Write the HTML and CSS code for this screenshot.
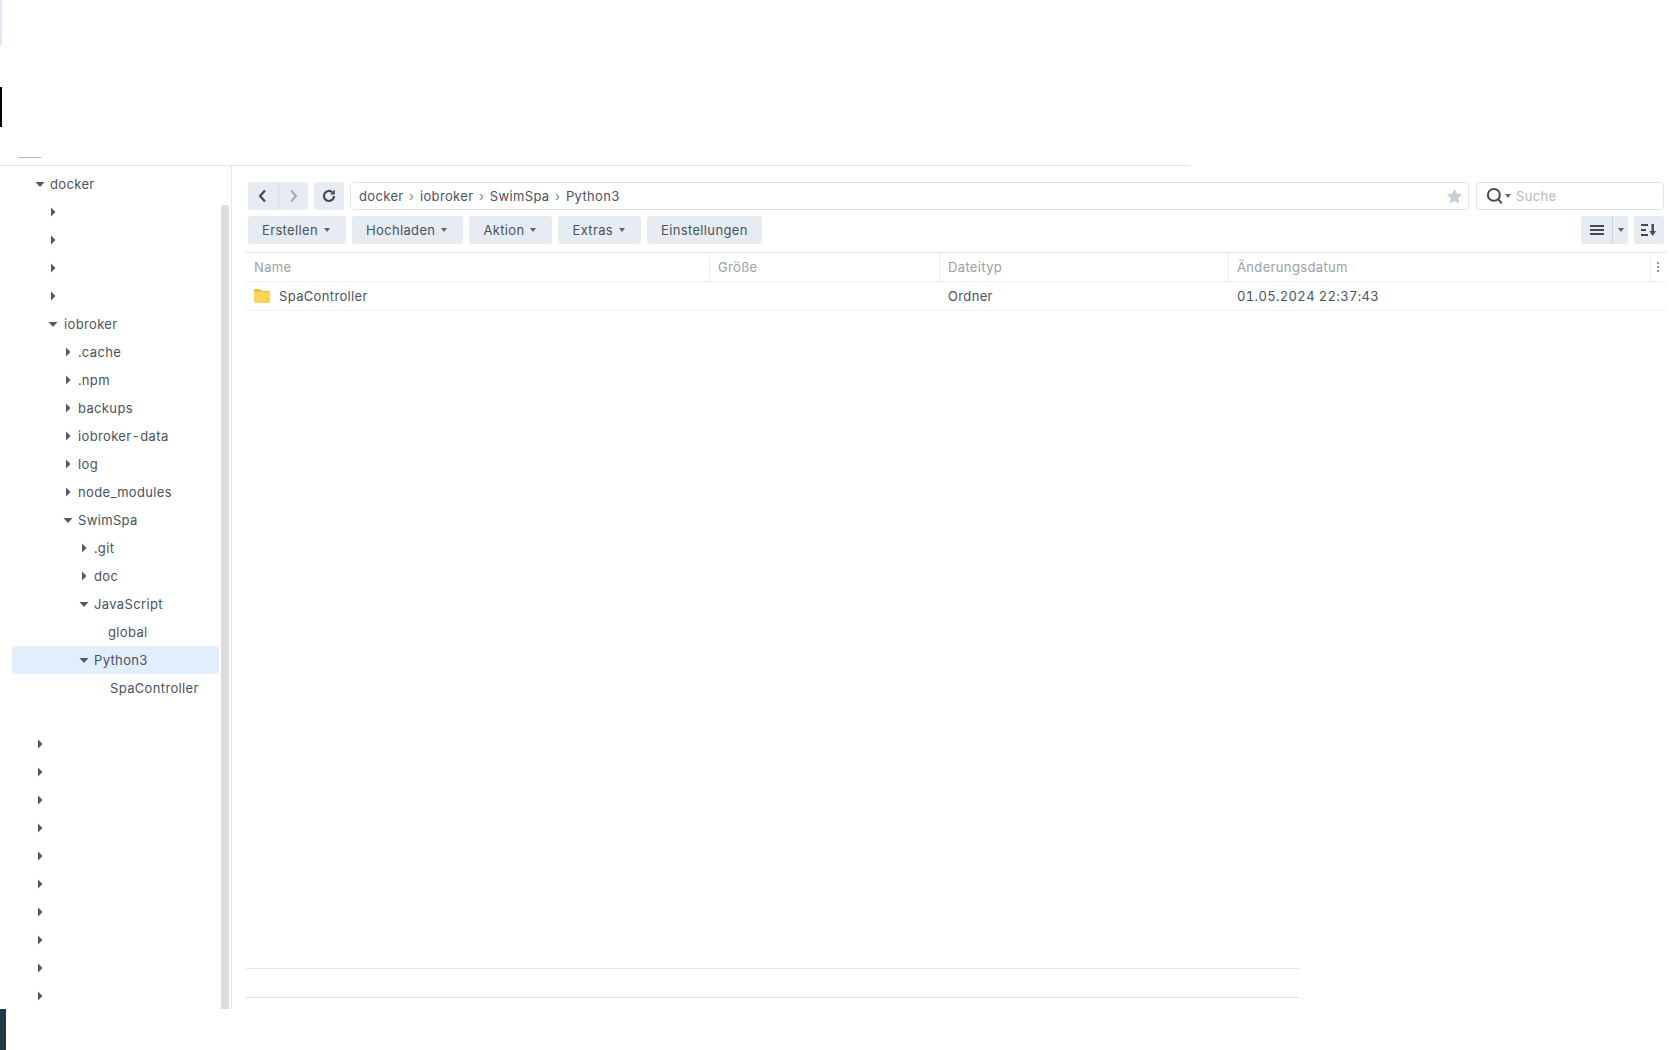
FILE: index.html
```html
<!DOCTYPE html>
<html lang="de">
<head>
<meta charset="utf-8">
<title>File Station</title>
<link rel="stylesheet" href="styles.css">
</head>
<body>
<div class="app">
  <span class="mark mark-blue"></span>
  <span class="mark mark-black"></span>
  <span class="mark mark-dash"></span>
  <span class="mark mark-teal"></span>
  <div class="topspace"></div>
  <div class="rule-top"></div>
  <div class="main">
    <aside class="sidebar">
      <div class="tree">
        <div class="row l0"><svg class="caret" viewBox="0 0 14 14"><path d="M2.500 5h9L7 10z"/></svg><span>docker</span></div>
        <div class="row l1"><svg class="caret" viewBox="0 0 14 14"><path d="M5 2.500v9L9.500 7z"/></svg></div>
        <div class="row l1"><svg class="caret" viewBox="0 0 14 14"><path d="M5 2.500v9L9.500 7z"/></svg></div>
        <div class="row l1"><svg class="caret" viewBox="0 0 14 14"><path d="M5 2.500v9L9.500 7z"/></svg></div>
        <div class="row l1"><svg class="caret" viewBox="0 0 14 14"><path d="M5 2.500v9L9.500 7z"/></svg></div>
        <div class="row l1"><svg class="caret" viewBox="0 0 14 14"><path d="M2.500 5h9L7 10z"/></svg><span>iobroker</span></div>
        <div class="row l2"><svg class="caret" viewBox="0 0 14 14"><path d="M5 2.500v9L9.500 7z"/></svg><span>.cache</span></div>
        <div class="row l2"><svg class="caret" viewBox="0 0 14 14"><path d="M5 2.500v9L9.500 7z"/></svg><span>.npm</span></div>
        <div class="row l2"><svg class="caret" viewBox="0 0 14 14"><path d="M5 2.500v9L9.500 7z"/></svg><span>backups</span></div>
        <div class="row l2"><svg class="caret" viewBox="0 0 14 14"><path d="M5 2.500v9L9.500 7z"/></svg><span>iobroker-data</span></div>
        <div class="row l2"><svg class="caret" viewBox="0 0 14 14"><path d="M5 2.500v9L9.500 7z"/></svg><span>log</span></div>
        <div class="row l2"><svg class="caret" viewBox="0 0 14 14"><path d="M5 2.500v9L9.500 7z"/></svg><span>node_modules</span></div>
        <div class="row l2"><svg class="caret" viewBox="0 0 14 14"><path d="M2.500 5h9L7 10z"/></svg><span>SwimSpa</span></div>
        <div class="row l3"><svg class="caret" viewBox="0 0 14 14"><path d="M5 2.500v9L9.500 7z"/></svg><span>.git</span></div>
        <div class="row l3"><svg class="caret" viewBox="0 0 14 14"><path d="M5 2.500v9L9.500 7z"/></svg><span>doc</span></div>
        <div class="row l3"><svg class="caret" viewBox="0 0 14 14"><path d="M2.500 5h9L7 10z"/></svg><span>JavaScript</span></div>
        <div class="row leaf-a"><span>global</span></div>
        <div class="row l3 selected"><svg class="caret" viewBox="0 0 14 14"><path d="M2.500 5h9L7 10z"/></svg><span>Python3</span></div>
        <div class="row leaf-b"><span>SpaController</span></div>
        <div class="row"></div>
        <div class="row l0"><svg class="caret" viewBox="0 0 14 14"><path d="M5 2.500v9L9.500 7z"/></svg></div>
        <div class="row l0"><svg class="caret" viewBox="0 0 14 14"><path d="M5 2.500v9L9.500 7z"/></svg></div>
        <div class="row l0"><svg class="caret" viewBox="0 0 14 14"><path d="M5 2.500v9L9.500 7z"/></svg></div>
        <div class="row l0"><svg class="caret" viewBox="0 0 14 14"><path d="M5 2.500v9L9.500 7z"/></svg></div>
        <div class="row l0"><svg class="caret" viewBox="0 0 14 14"><path d="M5 2.500v9L9.500 7z"/></svg></div>
        <div class="row l0"><svg class="caret" viewBox="0 0 14 14"><path d="M5 2.500v9L9.500 7z"/></svg></div>
        <div class="row l0"><svg class="caret" viewBox="0 0 14 14"><path d="M5 2.500v9L9.500 7z"/></svg></div>
        <div class="row l0"><svg class="caret" viewBox="0 0 14 14"><path d="M5 2.500v9L9.500 7z"/></svg></div>
        <div class="row l0"><svg class="caret" viewBox="0 0 14 14"><path d="M5 2.500v9L9.500 7z"/></svg></div>
        <div class="row l0"><svg class="caret" viewBox="0 0 14 14"><path d="M5 2.500v9L9.500 7z"/></svg></div>
      </div>
      <div class="scrollbar"></div>
    </aside>
    <section class="content">
      <div class="toolbar">
        <div class="btn-group">
          <button class="btn icon-btn nav-btn"><svg class="ico" viewBox="0 0 16 16"><path class="stroke strong" d="M10 2.500 5 8l5 5.500"/></svg></button>
          <button class="btn icon-btn nav-btn divided"><svg class="ico" viewBox="0 0 16 16"><path class="stroke muted" d="M5 2.500 10 8l-5 5.500"/></svg></button>
        </div>
        <button class="btn icon-btn refresh"><svg class="ico" viewBox="0 0 16 16"><path class="stroke strong" d="M13 8a5 5 0 1 1-1.600-3.700"/><path class="fill-dark" d="M13.800 1.800v4.700H9.100z"/></svg></button>
        <div class="path">
          <div class="crumbs">
            <span>docker</span><i class="sep">›</i><span>iobroker</span><i class="sep">›</i><span>SwimSpa</span><i class="sep">›</i><span>Python3</span>
          </div>
          <svg class="star" viewBox="0 0 16 16"><path d="M8 .8l2.200 4.700 5.100.6-3.800 3.500 1 5.100L8 12.200l-4.500 2.500 1-5.100L.7 6.100l5.100-.6z"/></svg>
        </div>
        <div class="search">
          <svg class="search-ico" viewBox="0 0 16 16"><circle cx="7" cy="7" r="5.300"/><path d="M10.800 10.800 14 14.500"/></svg>
          <i class="mini-caret"></i>
          <span class="placeholder">Suche</span>
        </div>
      </div>
      <div class="actions">
        <button class="btn text-btn has-menu">Erstellen<i class="mini-caret"></i></button>
        <button class="btn text-btn has-menu">Hochladen<i class="mini-caret"></i></button>
        <button class="btn text-btn has-menu">Aktion<i class="mini-caret"></i></button>
        <button class="btn text-btn has-menu">Extras<i class="mini-caret"></i></button>
        <button class="btn text-btn">Einstellungen</button>
        <div class="spacer"></div>
        <div class="btn-group view-group">
          <button class="btn icon-btn view-btn"><svg class="ico" viewBox="0 0 16 16"><path class="bars" d="M1 3h14v2H1zM1 7h14v2H1zM1 11h14v2H1z"/></svg></button>
          <button class="btn view-drop"><i class="mini-caret"></i></button>
        </div>
        <button class="btn icon-btn sort-btn"><svg class="ico" viewBox="0 0 16 16"><path class="bars" d="M0 2h7v2H0zM0 7h5v2H0zM0 12h7v2H0zM10.500 2h2.400v7H15l-3.300 5-3.300-5h2.100z"/></svg></button>
      </div>
      <div class="table">
        <div class="thead">
          <div class="cell c-name">Name</div>
          <div class="cell c-size">Größe</div>
          <div class="cell c-type">Dateityp</div>
          <div class="cell c-date">Änderungsdatum</div>
          <div class="cell c-more"><svg class="dots" viewBox="0 0 4 12"><circle cx="2" cy="2" r="1"/><circle cx="2" cy="6" r="1"/><circle cx="2" cy="10" r="1"/></svg></div>
        </div>
        <div class="trow">
          <div class="cell c-name name-cell">
            <svg class="folder" viewBox="0 0 16 14"><path class="folder-tab" d="M0 1.500C0 .7.700 0 1.500 0h3.700c.5 0 .9.200 1.200.6L7.500 2H16v3H0z"/><path class="folder-body" d="M0 3h14.500c.8 0 1.500.7 1.500 1.500v8c0 .8-.7 1.500-1.500 1.500h-13C.7 14 0 13.300 0 12.500z"/></svg>
            <span>SpaController</span>
          </div>
          <div class="cell c-size"></div>
          <div class="cell c-type">Ordner</div>
          <div class="cell c-date">01.05.2024 22:37:43</div>
          <div class="cell c-more"></div>
        </div>
      </div>
      <div class="foot">
        <div class="foot-row"></div>
      </div>
    </section>
  </div>
</div>
</body>
</html>
```
FILE: styles.css
```css
* { box-sizing: border-box; }
html, body { margin: 0; padding: 0; background: #fff; }
body { font-family: "Inter", "Noto Sans", sans-serif; font-size: 13px; letter-spacing: .35px; font-variant-numeric: tabular-nums; color: #4a535d; }
.app { position: relative; width: 1680px; height: 1050px; overflow: hidden; }
.topspace { height: 165px; }
.rule-top { width: 1190px; height: 1px; background: #e3e5e8; }
.mark { position: absolute; display: block; }
.mark-blue { left: 0; top: 0; width: 2px; height: 45px; background: #dbe6fa; }
.mark-black { left: 0; top: 87px; width: 2px; height: 40px; background: #000; }
.mark-dash { left: 19px; top: 157px; width: 22px; height: 1px; background: #b4b8bc; }
.mark-teal { left: 0; top: 1009px; width: 6px; height: 41px; background: #1e3a45; }
.main { display: flex; height: 843px; }
.sidebar { display: flex; width: 232px; height: 100%; border-right: 1px solid #e6e8ea; }
.tree { width: 219px; padding-top: 4px; overflow: hidden; }
.row { display: flex; align-items: center; height: 28px; margin-left: 12px; border-radius: 4px; white-space: nowrap; }
.row.l0 { padding-left: 21px; }
.row.l1 { padding-left: 34px; }
.row.l1 span { margin-left: 1px; }
.row.l2 { padding-left: 49px; }
.row.l3 { padding-left: 65px; }
.row.leaf-a { padding-left: 96px; }
.row.leaf-b { padding-left: 98px; }
.row.selected { background: #e1eefb; }
.caret { width: 14px; height: 14px; flex: none; margin-right: 3px; fill: #55595e; }
.scrollbar { width: 8px; margin: 39px 0 0 2px; height: 804px; background: #dcdcdc; border-radius: 3px 3px 0 0; }
.content { flex: 1; min-width: 0; padding: 16px 14px 0 14px; display: flex; flex-direction: column; }
.toolbar { display: flex; height: 28px; padding: 0 2px; }
.btn { display: flex; align-items: center; justify-content: center; height: 28px; padding: 0; border: 0; background: #e7ecf3; color: #4a535d; font: inherit; letter-spacing: inherit; border-radius: 3px; }
.btn-group { display: flex; }
.icon-btn { width: 30px; }
.nav-btn:first-child { border-radius: 3px 0 0 3px; }
.nav-btn.divided { border-radius: 0 3px 3px 0; border-left: 1px solid #d7dce3; }
.ico { width: 16px; height: 16px; display: block; }
.stroke { fill: none; stroke-width: 2.200; }
.strong { stroke: #414b55; }
.muted { stroke: #a5acb5; }
.fill-dark { fill: #414b55; }
.bars { fill: #414b55; }
.refresh { margin-left: 6px; }
.path { flex: 1; display: flex; align-items: center; justify-content: space-between; margin-left: 6px; padding: 0 5px 0 8px; border: 1px solid #e1e4e7; border-radius: 4px; }
.crumbs { display: flex; align-items: center; }
.sep { font-style: normal; color: #7b838c; margin: 0 5.500px; }
.star { width: 17px; height: 17px; fill: #c5ced6; }
.search { display: flex; align-items: center; width: 188px; margin-left: 7px; padding-left: 9px; border: 1px solid #e1e4e7; border-radius: 4px; }
.search-ico { width: 18px; height: 18px; fill: none; stroke: #414b55; stroke-width: 1.800; }
.search .mini-caret { margin-left: 1px; }
.placeholder { margin-left: 5px; color: #b4b9be; }
.mini-caret { display: inline-block; width: 0; height: 0; margin-left: 5px; border-left: 3.500px solid transparent; border-right: 3.500px solid transparent; border-top: 4px solid #5c646d; }
.actions { display: flex; gap: 6px; height: 28px; margin-top: 6px; padding: 0 2px; }
.text-btn { padding: 0 14px; white-space: nowrap; }
.has-menu { padding-right: 16px; }
.has-menu .mini-caret { margin-left: 6px; }
.spacer { flex: 1; }
.view-btn { width: 31px; border-radius: 3px 0 0 3px; }
.view-drop { width: 16px; border-left: 1px solid #cfd5dd; border-radius: 0 3px 3px 0; }
.view-drop .mini-caret { margin-left: 0; }
.sort-btn { width: 30px; }
.table { margin-top: 8px; }
.thead { display: flex; height: 30px; border-top: 1px solid #dfe1e4; border-bottom: 1px solid #eceef0; color: #9aa0a7; }
.trow { display: flex; height: 29px; border-bottom: 1px solid #eceef0; }
.cell { display: flex; align-items: center; padding-left: 8px; }
.c-name { width: 463px; }
.c-size { width: 230px; }
.c-type { width: 289px; }
.c-date { width: 422px; }
.c-more { flex: 1; padding: 0 2px 0 0; justify-content: center; }
.thead .cell + .cell { border-left: 1px solid #eceef0; }
.trow .cell + .cell { border-left: 1px solid transparent; }
.dots { width: 4px; height: 12px; fill: #6d747c; }
.name-cell { gap: 9px; }
.folder { width: 16px; height: 14px; flex: none; }
.folder-tab { fill: #f2b93a; }
.folder-body { fill: #fdd35c; }
.foot { margin-top: 657px; width: 1053px; height: 30px; border-top: 1px solid #e6e8ea; border-bottom: 1px solid #dcdee0; }
```
